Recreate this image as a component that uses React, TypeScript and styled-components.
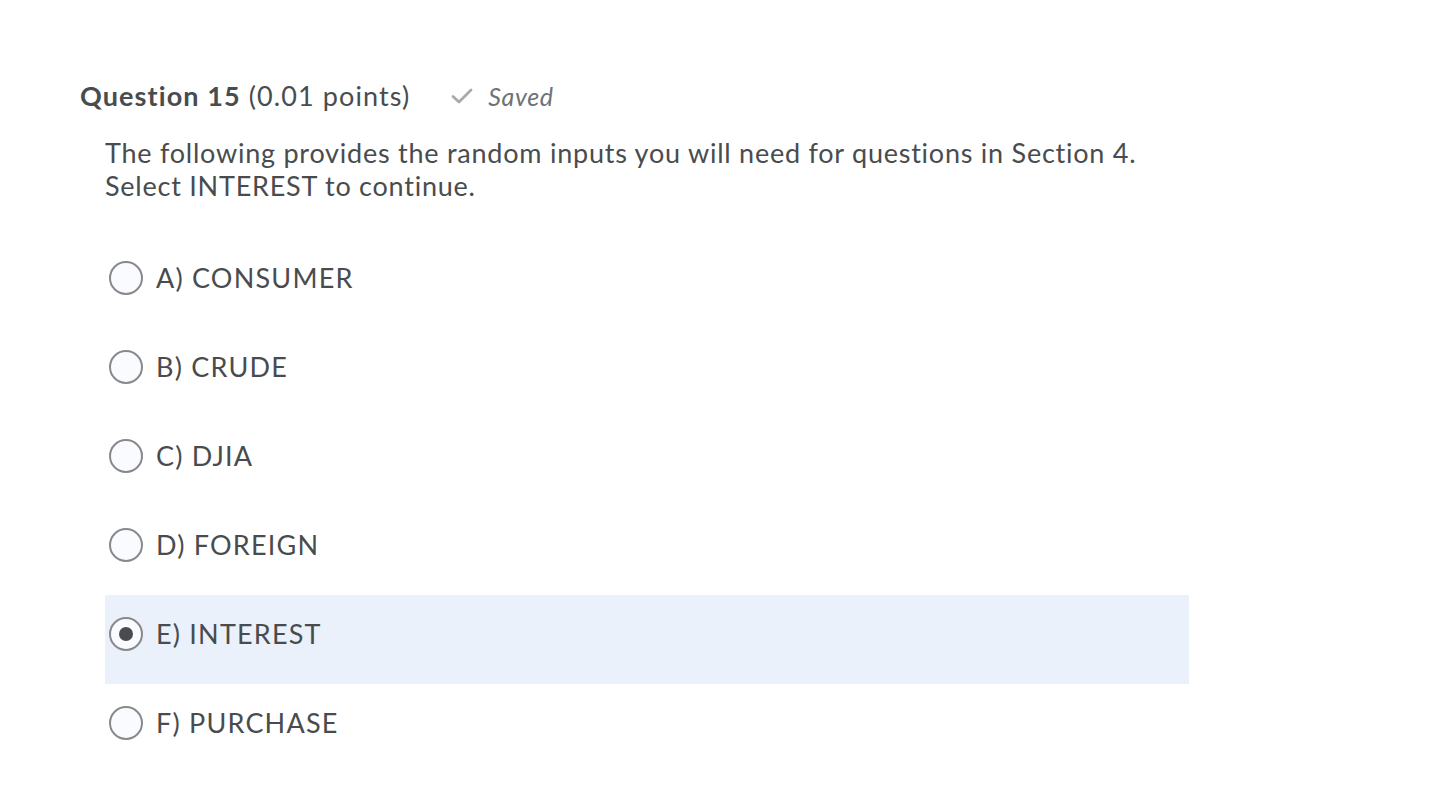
import React from "react";
import styled, { createGlobalStyle } from "styled-components";

const Global = createGlobalStyle`
  html, body { margin: 0; padding: 0; background: #ffffff; }
  body { font-family: Lato, "Open Sans", sans-serif; color: #494c4e; }
`;

const Page = styled.div`
  padding: 76px 0 0 80px;
  width: 1109px;
`;

const Header = styled.div`
  display: flex;
  align-items: center;
  gap: 41px;
  height: 40px;
`;

const Title = styled.h2`
  margin: 0;
  font-size: 27px;
  font-weight: 400;
  letter-spacing: 1.1px;
  line-height: 40px;
  color: #494c4e;
  strong { font-weight: 700; }
`;

const Saved = styled.span`
  display: inline-flex;
  align-items: center;
  gap: 15px;
  font-size: 25px;
  letter-spacing: 0.6px;
  font-style: italic;
  color: #6e7376;
`;

const Body = styled.div`
  padding-left: 25px;
`;

const Prompt = styled.p`
  margin: 20px 0 37px;
  font-size: 27px;
  letter-spacing: 0.76px;
  line-height: 33px;
`;

const Options = styled.div`
  display: flex;
  flex-direction: column;
`;

const Option = styled.label<{ $selected?: boolean }>`
  box-sizing: border-box;
  display: flex;
  align-items: center;
  gap: 13px;
  height: 89px;
  padding: 0 0 12px 4px;
  background: ${(p) => (p.$selected ? "#eaf1fb" : "transparent")};
  font-size: 27px;
  letter-spacing: 1.2px;
  cursor: pointer;
`;

const Radio = styled.span<{ $checked?: boolean }>`
  box-sizing: border-box;
  flex: none;
  width: 34px;
  height: 34px;
  border-radius: 50%;
  border: 2px solid #87898b;
  background: #f9fbff;
  display: flex;
  align-items: center;
  justify-content: center;
  &::after {
    content: "";
    width: 14px;
    height: 14px;
    border-radius: 50%;
    background: #494c4e;
    display: ${(p) => (p.$checked ? "block" : "none")};
  }
`;

const options = [
  "A) CONSUMER",
  "B) CRUDE",
  "C) DJIA",
  "D) FOREIGN",
  "E) INTEREST",
  "F) PURCHASE",
];

export default function App() {
  return (
    <>
      <Global />
      <Page>
        <Header>
          <Title>
            <strong>Question 15</strong> (0.01 points)
          </Title>
          <Saved>
            <svg width="22" height="18" viewBox="0 0 22 18" fill="none">
              <path d="M2 9.5 L8 15 L20 3" stroke="#a8abad" strokeWidth="2.8" strokeLinecap="round" strokeLinejoin="round" />
            </svg>
            Saved
          </Saved>
        </Header>
        <Body>
          <Prompt>
            The following provides the random inputs you will need for questions in Section 4.
            <br />
            Select INTEREST to continue.
          </Prompt>
          <Options>
            {options.map((o) => {
              const sel = o.startsWith("E)");
              return (
                <Option key={o} $selected={sel}>
                  <Radio $checked={sel} />
                  {o}
                </Option>
              );
            })}
          </Options>
        </Body>
      </Page>
    </>
  );
}
